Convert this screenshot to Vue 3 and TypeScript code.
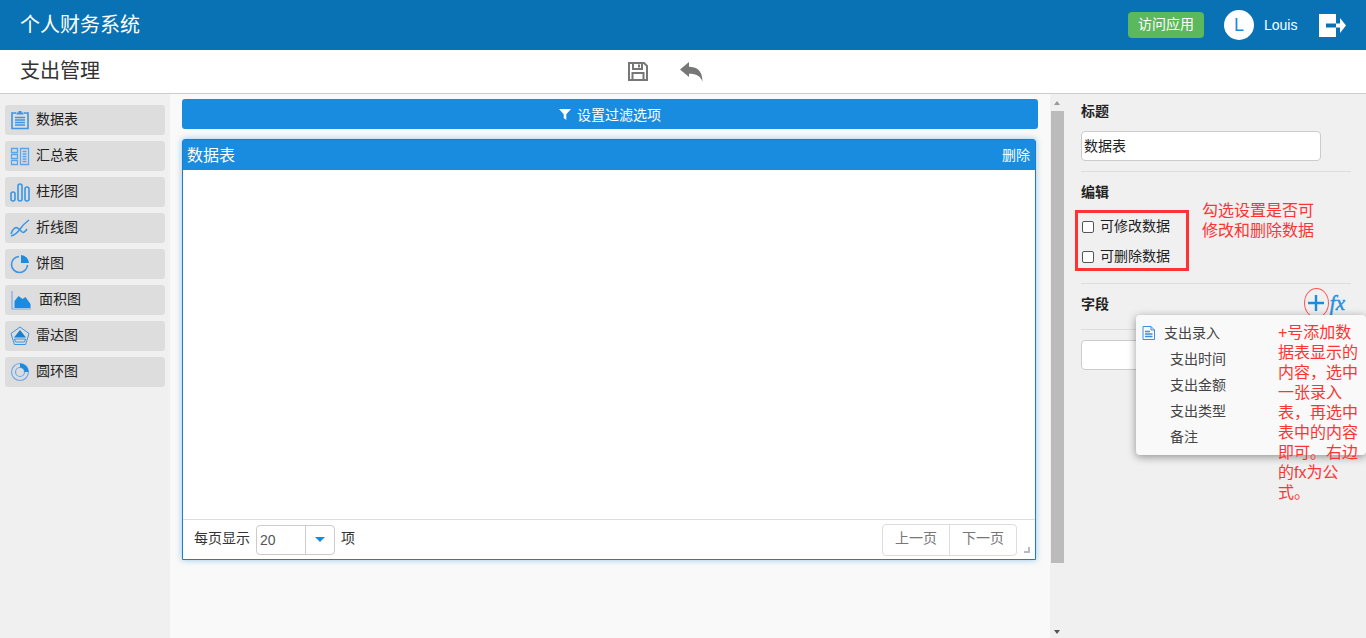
<script setup lang="ts">
const charts = [
  { name: '数据表', icon: 'table' },
  { name: '汇总表', icon: 'summary' },
  { name: '柱形图', icon: 'bar' },
  { name: '折线图', icon: 'line' },
  { name: '饼图', icon: 'pie' },
  { name: '面积图', icon: 'area' },
  { name: '雷达图', icon: 'radar' },
  { name: '圆环图', icon: 'ring' }
]
const fields = ['支出时间', '支出金额', '支出类型', '备注']
</script>

<template>
  <div class="page">
    <header class="top">
      <div class="brand">个人财务系统</div>
      <div class="top-right">
        <button class="visit">访问应用</button>
        <span class="avatar">L</span>
        <span class="user">Louis</span>
        <svg class="logout" width="27" height="23" viewBox="0 0 27 23">
          <path d="M0 0h17v23H0z" fill="#fff" />
          <path d="M7 9.500h10v4H7z" fill="#0872b4" />
          <path d="M17 9.500h4V4l6 7.500-6 7.500v-5.500h-4z" fill="#fff" />
        </svg>
      </div>
    </header>

    <div class="sub">
      <div class="sub-title">支出管理</div>
      <div class="tools">
        <svg width="20" height="19" viewBox="0 0 20 19" fill="none" stroke="#777" stroke-width="2">
          <path d="M1 1h15l3 3v14H1z" />
          <path d="M5 1v6h9V1M4.500 18v-7h11v7" />
          <path d="M11 2.500v3" />
        </svg>
        <svg width="23" height="20" viewBox="0 0 23 20">
          <path d="M0 7.500 9 0v4.800c7 0 13.500 3 13.500 15-1.800-5.500-6-8-13.500-8V15z" fill="#777" />
        </svg>
      </div>
    </div>

    <main class="main">
      <aside class="side">
        <div v-for="c in charts" :key="c.name" class="side-item" :class="{ wide: c.icon === 'area' }">
          <svg class="side-icon" width="20" height="20" viewBox="0 0 20 20" fill="none" stroke="#3a95e6" stroke-width="1.300">
            <template v-if="c.icon === 'table'">
              <path d="M6 3H2v15.500h16V3h-4" stroke-width="1.600" />
              <path d="M6.500 4.500v-2h2V1h3v1.500h2v2z" fill="#3a95e6" stroke="none" />
              <path d="M5 7.500h10M5 10h10M5 12.500h10M5 15h10" />
            </template>
            <template v-else-if="c.icon === 'summary'">
              <path d="M1.500 2.500h6v4h-6zM1.500 8.500h6v4h-6zM1.500 14.500h6v4h-6zM10.500 2.500h8v16h-8z" stroke="#5aa5ea" />
              <path d="M12.500 5.500h4M12.500 8h4M12.500 10.500h4M12.500 13h4M12.500 15.500h4" stroke="#5aa5ea" />
            </template>
            <template v-else-if="c.icon === 'bar'">
              <rect x="1" y="10" width="4" height="9" rx="2" stroke-width="1.600" />
              <rect x="8" y="2" width="4" height="17" rx="2" stroke-width="1.600" />
              <rect x="15" y="5" width="4" height="14" rx="2" stroke-width="1.600" />
            </template>
            <template v-else-if="c.icon === 'line'">
              <path d="M1 18c4-1 7-4 9-7s5-6 9-9" stroke-width="1.500" />
              <path d="M1 16c2-6 5-8 8-5s4 6 8 0" stroke-width="1.500" />
            </template>
            <template v-else-if="c.icon === 'pie'">
              <path d="M9 2.500a8 8 0 1 0 8.500 8.500" stroke-width="1.600" />
              <path d="M11 1a8.500 8.500 0 0 1 8 8h-8z" fill="#1a8cdf" stroke="none" />
            </template>
            <template v-else-if="c.icon === 'area'">
              <path d="M1.500 1v18h19" stroke="#7aa8ee" stroke-width="1.200" />
              <path d="M4 18v-7l4-5 4 3 3-2 5 7v4z" fill="#1a8cdf" stroke="none" />
            </template>
            <template v-else-if="c.icon === 'radar'">
              <path d="M10 1l9 6.500-3.400 11H4.400L1 7.500z" stroke-width="1" />
              <path d="M10 4l6 7.500H4z" fill="#1a7ed0" stroke="none" />
              <path d="M4.500 13h11l-1 3h-9z" stroke-width="1" />
            </template>
            <template v-else>
              <circle cx="10" cy="10" r="8.500" stroke="#6ea8ee" stroke-width="1.200" />
              <circle cx="10" cy="10" r="4.500" stroke="#6ea8ee" stroke-width="1.200" />
              <path d="M10 1.500a8.500 8.500 0 0 1 8.500 8.500h-4a4.500 4.500 0 0 0-4.500-4.500z" fill="#1a8cdf" stroke="none" />
            </template>
          </svg>
          <span>{{ c.name }}</span>
        </div>
      </aside>

      <section class="center">
        <button class="filter">
          <svg width="12" height="12" viewBox="0 0 12 12"><path d="M0 1h12L7.300 6.200V12L4.700 10V6.200z" fill="#fff" /></svg>
          设置过滤选项
        </button>
        <div class="panel">
          <div class="panel-head">
            <span class="panel-title">数据表</span>
            <span class="panel-del">删除</span>
          </div>
          <div class="panel-body"></div>
          <div class="panel-foot">
            <span class="foot-text">每页显示</span>
            <div class="select">
              <span class="select-value">20</span>
              <span class="select-arrow"><i></i></span>
            </div>
            <span class="foot-text">项</span>
            <div class="pager">
              <span>上一页</span>
              <span>下一页</span>
            </div>
            <span class="resize"></span>
          </div>
        </div>
      </section>

      <div class="scroll">
        <i class="up"></i>
        <div class="thumb"></div>
        <i class="down"></i>
      </div>

      <aside class="props">
        <div class="block first">
          <div class="label">标题</div>
          <input class="text-input" value="数据表" />
        </div>
        <div class="block edit">
          <div class="label">编辑</div>
          <div class="checks">
            <label class="check"><i></i><span>可修改数据</span></label>
            <label class="check"><i></i><span>可删除数据</span></label>
          </div>
        </div>
        <div class="block field-head">
          <div class="label">字段</div>
          <div class="field-tools">
            <svg width="16" height="16" viewBox="0 0 16 16"><path d="M8 0v16M0 8h16" stroke="#1a8cdf" stroke-width="2.400" /></svg>
            <span class="fx">fx</span>
          </div>
        </div>
        <div class="block last">
          <div class="text-input empty"></div>
        </div>

        <div class="red-box"></div>
        <div class="note note-a">勾选设置是否可<br />修改和删除数据</div>
        <div class="ring"></div>

        <div class="popup">
          <div class="pop-head">
            <svg width="13" height="14" viewBox="0 0 13 14" fill="none" stroke="#3a8fe0">
              <path d="M1 .500h8l3.500 3.500v9.500H1z" />
              <path d="M9 .500V4h3.500" />
              <path d="M3 5.500h5M3 8h7.500M3 10.500h7.500" stroke-width="1.300" />
            </svg>
            <span>支出录入</span>
          </div>
          <div v-for="f in fields" :key="f" class="pop-item">{{ f }}</div>
        </div>
        <div class="note note-b">+号添加数据表显示的内容，选中一张录入表，再选中表中的内容即可。右边的fx为公式。</div>
      </aside>
    </main>
  </div>
</template>

<style>
html, body { margin: 0; overflow: hidden; }
</style>

<style scoped>
.page {
  width: 1366px;
  height: 638px;
  display: flex;
  flex-direction: column;
  overflow: hidden;
  font-family: "Liberation Sans", "Noto Sans CJK SC", sans-serif;
  font-size: 14px;
  color: #333;
}
.top {
  height: 50px;
  flex: none;
  background: #0872b4;
  display: flex;
  align-items: center;
  justify-content: space-between;
  padding: 0 20px;
  color: #fff;
}
.brand { font-size: 20px; margin-top: -4px; }
.top-right { display: flex; align-items: center; }
.visit {
  width: 76px;
  height: 26px;
  border: 0;
  padding: 0 0 4px;
  border-radius: 4px;
  background: #5cb85c;
  color: #fff;
  font: inherit;
  font-size: 14px;
}
.avatar {
  width: 30px;
  height: 30px;
  margin-left: 20px;
  border-radius: 50%;
  background: #fff;
  color: #1a8cdf;
  font-size: 18px;
  line-height: 30px;
  text-align: center;
}
.user { margin-left: 10px; font-size: 14px; width: 55px; }
.sub {
  height: 44px;
  flex: none;
  box-sizing: border-box;
  background: #fff;
  border-bottom: 1px solid #ccc;
  display: flex;
  align-items: center;
  padding: 0 20px;
}
.sub-title { font-size: 20px; color: #333; width: 608px; margin-top: -5px; }
.tools { display: flex; align-items: center; gap: 32px; }
.main { flex: 1; display: flex; min-height: 0; }
.side {
  width: 170px;
  flex: none;
  box-sizing: border-box;
  background: #f0f0f0;
  padding: 11px 5px 0;
  display: flex;
  flex-direction: column;
  gap: 6px;
}
.side-item {
  height: 30px;
  border-radius: 3px;
  background: #ddd;
  display: flex;
  align-items: center;
  padding-left: 5px;
  color: #222;
}
.side-item span { margin-top: -4px; }
.side-icon { flex: none; margin-right: 6px; }
.side-item.wide .side-icon { margin-right: 8px; width: 21px; }
.center {
  width: 880px;
  flex: none;
  box-sizing: border-box;
  background: #f9f9f9;
  padding: 5px 12px 0;
}
.filter {
  width: 856px;
  height: 30px;
  display: flex;
  align-items: center;
  justify-content: center;
  gap: 6px;
  border: 0;
  border-radius: 3px;
  background: #1a8cdf;
  color: #fff;
  font: inherit;
  font-size: 14px;
  padding: 0;
}
.panel {
  width: 854px;
  height: 421px;
  margin-top: 10px;
  box-sizing: border-box;
  border: 1px solid #1a7ecb;
  border-radius: 3px 3px 0 0;
  background: #fff;
  box-shadow: 0 0 6px rgba(26, 140, 223, 0.45);
  display: flex;
  flex-direction: column;
}
.panel-head {
  height: 30px;
  flex: none;
  box-sizing: border-box;
  background: #1a8cdf;
  display: flex;
  align-items: center;
  justify-content: space-between;
  padding: 0 5px 3px 4px;
  color: #fff;
}
.panel-title { font-size: 16px; }
.panel-del { font-size: 14px; }
.panel-body { flex: 1; }
.panel-foot {
  height: 40px;
  flex: none;
  box-sizing: border-box;
  border-top: 1px solid #ddd;
  display: flex;
  align-items: center;
  padding: 0 18px 0 11px;
  gap: 6px;
  position: relative;
  color: #333;
}
.foot-text { margin-top: -6px; }
.select {
  width: 79px;
  height: 30px;
  box-sizing: border-box;
  border: 1px solid #ccc;
  border-radius: 4px;
  display: flex;
  background: #fff;
}
.select-value {
  width: 49px;
  box-sizing: border-box;
  padding-left: 3px;
  line-height: 28px;
  font-size: 14px;
  color: #555;
  border-right: 1px solid #ccc;
}
.select-arrow { flex: 1; display: flex; align-items: center; justify-content: center; }
.select-arrow i {
  width: 0;
  height: 0;
  border-left: 5px solid transparent;
  border-right: 5px solid transparent;
  border-top: 5px solid #1a8cdf;
}
.pager {
  margin-left: auto;
  height: 32px;
  box-sizing: border-box;
  border: 1px solid #ddd;
  border-radius: 4px;
  display: flex;
  color: #777;
}
.pager span {
  width: 66px;
  text-align: center;
  line-height: 27px;
}
.pager span + span { border-left: 1px solid #ddd; }
.resize {
  position: absolute;
  right: 5px;
  bottom: 6px;
  width: 6px;
  height: 6px;
  border-right: 2px solid #bbb;
  border-bottom: 2px solid #bbb;
  box-sizing: border-box;
}
.scroll {
  width: 15px;
  flex: none;
  background: #f0f0f0;
  position: relative;
}
.thumb {
  position: absolute;
  left: 1px;
  top: 17px;
  width: 13px;
  height: 452px;
  background: #bbb;
}
.up, .down {
  position: absolute;
  left: 4px;
  width: 0;
  height: 0;
  border-left: 3.500px solid transparent;
  border-right: 3.500px solid transparent;
}
.up { top: 7px; border-bottom: 4px solid #999; }
.down { bottom: 4px; border-top: 4px solid #555; }
.props {
  flex: 1;
  background: #f0f0f0;
  position: relative;
  padding: 0 15px 0 16px;
}
.block { border-bottom: 1px solid #ddd; }
.block.first { height: 78px; box-sizing: border-box; padding-top: 8px; }
.block.edit { height: 112px; box-sizing: border-box; padding-top: 11px; }
.block.field-head {
  height: 46px;
  box-sizing: border-box;
  display: flex;
  justify-content: space-between;
  align-items: center;
  padding-bottom: 5px;
}
.block.last { border: 0; padding-top: 10px; }
.label { font-weight: 700; font-size: 14px; line-height: 18px; color: #222; }
.block.first .label { margin-bottom: 11px; }
.text-input {
  display: block;
  width: 240px;
  height: 30px;
  box-sizing: border-box;
  border: 1px solid #ccc;
  border-radius: 4px;
  background: #fff;
  padding: 0 2px 3px;
  font: inherit;
  font-size: 14px;
  color: #222;
  outline: none;
}
.checks {
  margin-top: 17px;
  display: flex;
  flex-direction: column;
  gap: 12px;
}
.check {
  display: flex;
  align-items: center;
  height: 18px;
  color: #222;
}
.check span { margin-top: -5px; }
.check i {
  width: 12px;
  height: 12px;
  box-sizing: border-box;
  margin-left: 1px;
  margin-right: 6px;
  border: 1px solid #555;
  border-radius: 2px;
  background: #fff;
}
.field-tools {
  display: flex;
  align-items: center;
  gap: 6px;
  margin-right: 6px;
  margin-top: -3px;
}
.fx {
  font-family: "Liberation Serif", serif;
  font-style: italic;
  font-size: 21px;
  color: #2b8fdc;
  line-height: 18px;
  -webkit-text-stroke: 0.5px #2b8fdc;
}
.red-box {
  position: absolute;
  left: 10px;
  top: 116px;
  width: 114px;
  height: 61px;
  box-sizing: border-box;
  border: 3px solid #ff3333;
}
.note {
  position: absolute;
  color: #ff3333;
  font-size: 16px;
  line-height: 20px;
}
.note-a { left: 137px; top: 107px; white-space: nowrap; }
.note-b { left: 213px; top: 229px; width: 82px; word-break: break-all; }
.ring {
  position: absolute;
  left: 239px;
  top: 194px;
  width: 25px;
  height: 30px;
  box-sizing: border-box;
  border: 1px solid #ff5555;
  border-radius: 50%;
}
.popup {
  position: absolute;
  left: 71px;
  top: 221px;
  width: 230px;
  height: 140px;
  box-sizing: border-box;
  padding-top: 5px;
  background: #f9f9f9;
  border-radius: 4px;
  box-shadow: 0 2px 8px rgba(0, 0, 0, 0.4);
  color: #444;
}
.pop-head {
  height: 26px;
  display: flex;
  align-items: center;
  gap: 9px;
  padding-left: 6px;
}
.pop-head span { margin-top: -3px; }
.pop-item { height: 26px; line-height: 26px; padding-left: 34px; }
</style>
